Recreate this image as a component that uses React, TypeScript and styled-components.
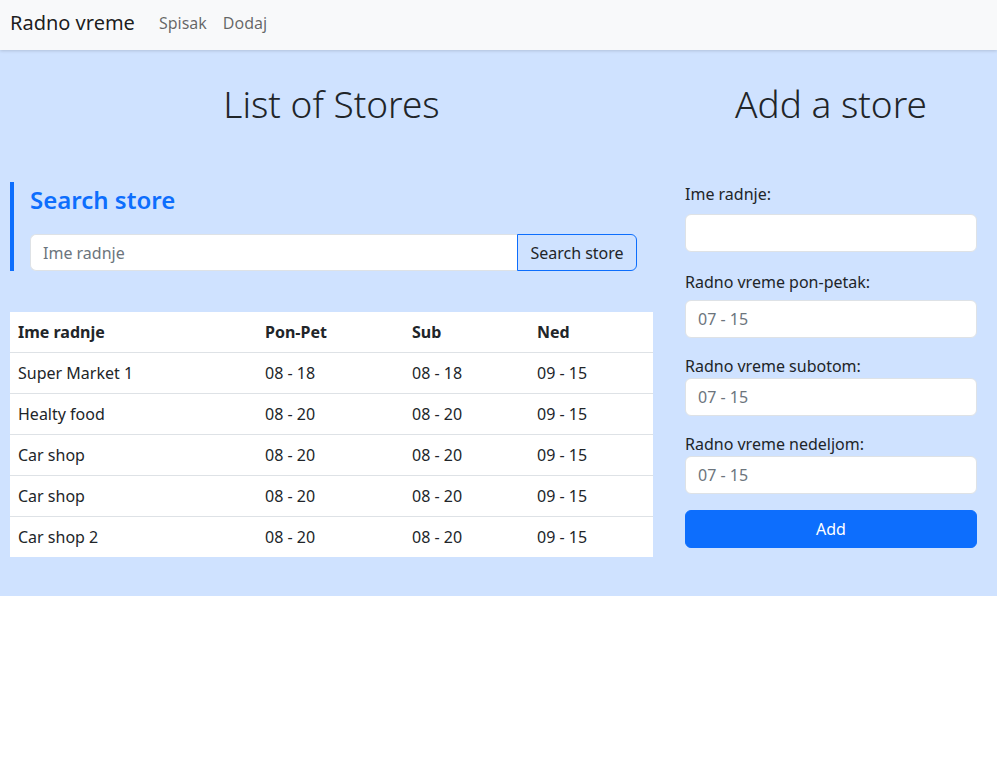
import React from 'react';
import styled, { createGlobalStyle } from 'styled-components';

const GlobalStyle = createGlobalStyle`
  * { box-sizing: border-box; }
  body {
    margin: 0;
    font-family: "Noto Sans", "Liberation Sans", sans-serif;
    font-size: 16px;
    line-height: 1.5;
    color: #212529;
    background: #fff;
  }
`;

const Navbar = styled.nav`
  height: 50px;
  background: #f8f9fa;
  display: flex;
  align-items: center;
  padding: 0 10px;
  box-shadow: 0 1px 3px rgba(0, 0, 0, 0.15);
  position: relative;
  z-index: 1;
`;

const Brand = styled.a`
  font-size: 20px;
  color: rgba(0, 0, 0, 0.9);
  text-decoration: none;
  margin-right: 16px;
  margin-top: -4px;
`;

const NavLink = styled.a`
  font-size: 16px;
  color: rgba(0, 0, 0, 0.6);
  text-decoration: none;
  padding: 0 8px;
  margin-top: -4px;
`;

const Main = styled.main`
  background: #cfe2ff;
  display: flex;
  gap: 32px;
  padding: 32px 20px 39px 10px;
`;

const Column = styled.section<{ $width: number }>`
  width: ${(p) => p.$width}px;
  flex-shrink: 0;
`;

const PageTitle = styled.h1`
  margin: 0 0 56px;
  font-size: 37px;
  font-weight: 300;
  line-height: 1.2;
  text-align: center;
  color: #212529;
`;

const SearchBlock = styled.div`
  border-left: 4px solid #0d6efd;
  padding: 4px 16px 0;
  height: 89px;
`;

const SearchTitle = styled.h4`
  margin: 0 0 19px;
  font-size: 24px;
  font-weight: 600;
  line-height: 1.2;
  color: #0d6efd;
`;

const InputGroup = styled.div`
  display: flex;
  height: 37px;
`;

const SearchInput = styled.input`
  flex: 1;
  min-width: 0;
  font: inherit;
  font-size: 16px;
  padding: 6px 12px;
  border: 1px solid #dee2e6;
  border-right: none;
  border-radius: 6px 0 0 6px;
  background: #fff;
  &::placeholder { color: #6c757d; }
`;

const SearchButton = styled.button`
  width: 120px;
  font: inherit;
  font-size: 16px;
  color: #212529;
  background: transparent;
  border: 1px solid #0d6efd;
  border-radius: 0 6px 6px 0;
  padding: 6px 12px;
`;

const Table = styled.table`
  width: 100%;
  margin-top: 41px;
  border-collapse: collapse;
  background: #fff;
`;

const Th = styled.th<{ $width: number }>`
  width: ${(p) => p.$width}px;
  text-align: left;
  font-weight: 700;
  padding: 8px;
  border-bottom: 1px solid #dee2e6;
`;

const Td = styled.td`
  padding: 8px;
  border-bottom: 1px solid #dee2e6;
`;

const Row = styled.tr`
  &:last-child td { border-bottom: none; }
`;

const Field = styled.div<{ $gap: number }>`
  display: flex;
  flex-direction: column;
  margin-bottom: ${(p) => p.$gap}px;
`;

const Label = styled.label<{ $mb: number }>`
  margin-bottom: ${(p) => p.$mb}px;
`;

const FormInput = styled.input`
  height: 38px;
  font: inherit;
  font-size: 16px;
  padding: 6px 12px;
  border: 1px solid #dee2e6;
  border-radius: 6px;
  background: #fff;
  &::placeholder { color: #6c757d; }
`;

const AddButton = styled.button`
  width: 100%;
  height: 38px;
  font: inherit;
  font-size: 16px;
  color: #fff;
  background: #0d6efd;
  border: 1px solid #0d6efd;
  border-radius: 6px;
`;

const stores = [
  { name: 'Super Market 1', week: '08 - 18', sat: '08 - 18', sun: '09 - 15' },
  { name: 'Healty food', week: '08 - 20', sat: '08 - 20', sun: '09 - 15' },
  { name: 'Car shop', week: '08 - 20', sat: '08 - 20', sun: '09 - 15' },
  { name: 'Car shop', week: '08 - 20', sat: '08 - 20', sun: '09 - 15' },
  { name: 'Car shop 2', week: '08 - 20', sat: '08 - 20', sun: '09 - 15' },
];

const fields = [
  { label: 'Ime radnje:', placeholder: '', mb: 8, gap: 18 },
  { label: 'Radno vreme pon-petak:', placeholder: '07 - 15', mb: 6, gap: 16 },
  { label: 'Radno vreme subotom:', placeholder: '07 - 15', mb: 0, gap: 16 },
  { label: 'Radno vreme nedeljom:', placeholder: '07 - 15', mb: 0, gap: 16 },
];

const App: React.FC = () => {
  return (
    <>
      <GlobalStyle />
      <Navbar>
        <Brand href="#">Radno vreme</Brand>
        <NavLink href="#">Spisak</NavLink>
        <NavLink href="#">Dodaj</NavLink>
      </Navbar>
      <Main>
        <Column $width={643}>
          <PageTitle>List of Stores</PageTitle>
          <SearchBlock>
            <SearchTitle>Search store</SearchTitle>
            <InputGroup>
              <SearchInput placeholder="Ime radnje" />
              <SearchButton>Search store</SearchButton>
            </InputGroup>
          </SearchBlock>
          <Table>
            <thead>
              <tr>
                <Th $width={247}>Ime radnje</Th>
                <Th $width={147}>Pon-Pet</Th>
                <Th $width={125}>Sub</Th>
                <Th $width={124}>Ned</Th>
              </tr>
            </thead>
            <tbody>
              {stores.map((s, i) => (
                <Row key={i}>
                  <Td>{s.name}</Td>
                  <Td>{s.week}</Td>
                  <Td>{s.sat}</Td>
                  <Td>{s.sun}</Td>
                </Row>
              ))}
            </tbody>
          </Table>
        </Column>
        <Column $width={292}>
          <PageTitle>Add a store</PageTitle>
          {fields.map((f) => (
            <Field key={f.label} $gap={f.gap}>
              <Label $mb={f.mb}>{f.label}</Label>
              <FormInput placeholder={f.placeholder} />
            </Field>
          ))}
          <AddButton>Add</AddButton>
        </Column>
      </Main>
    </>
  );
};

export default App;
